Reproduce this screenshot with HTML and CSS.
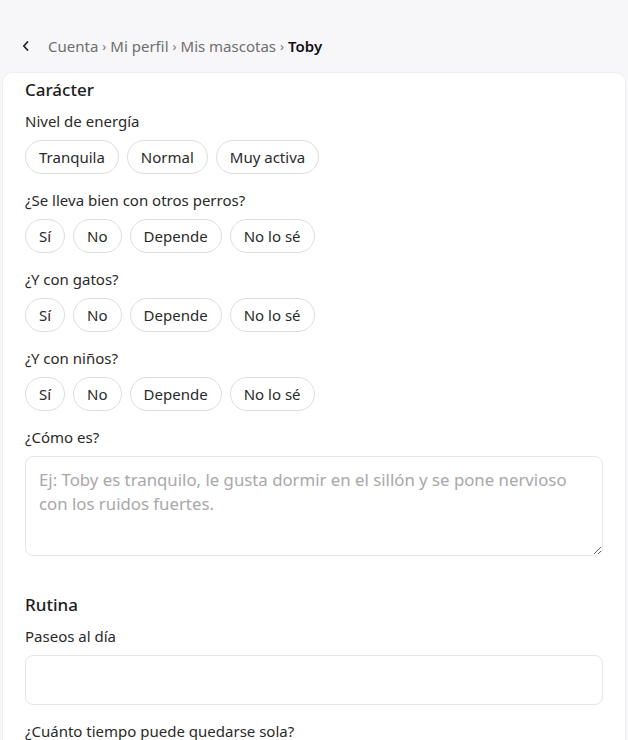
FILE: index.html
```html
<!DOCTYPE html>
<html lang="es">
<head>
<meta charset="utf-8">
<link rel="stylesheet" href="styles.css">
</head>
<body>
<nav class="crumbs">
  <svg class="back" width="10" height="12" viewBox="0 0 10 12"><path d="M6.5 2 L2.8 6 L6.5 10" fill="none" stroke="#222" stroke-width="1.8" stroke-linecap="round" stroke-linejoin="round"/></svg>
  <span class="link">Cuenta</span><span class="sep">›</span><span class="link">Mi perfil</span><span class="sep">›</span><span class="link">Mis mascotas</span><span class="sep">›</span><span class="current">Toby</span>
</nav>
<main class="card">
  <section class="section">
    <h2 class="title">Carácter</h2>
    <div class="field">
      <div class="label">Nivel de energía</div>
      <div class="pills"><span class="pill">Tranquila</span><span class="pill">Normal</span><span class="pill">Muy activa</span></div>
    </div>
    <div class="field">
      <div class="label">¿Se lleva bien con otros perros?</div>
      <div class="pills"><span class="pill">Sí</span><span class="pill">No</span><span class="pill">Depende</span><span class="pill">No lo sé</span></div>
    </div>
    <div class="field">
      <div class="label">¿Y con gatos?</div>
      <div class="pills"><span class="pill">Sí</span><span class="pill">No</span><span class="pill">Depende</span><span class="pill">No lo sé</span></div>
    </div>
    <div class="field">
      <div class="label">¿Y con niños?</div>
      <div class="pills"><span class="pill">Sí</span><span class="pill">No</span><span class="pill">Depende</span><span class="pill">No lo sé</span></div>
    </div>
    <div class="field">
      <div class="label">¿Cómo es?</div>
      <textarea class="area" placeholder="Ej: Toby es tranquilo, le gusta dormir en el sillón y se pone nervioso con los ruidos fuertes."></textarea>
    </div>
  </section>
  <section class="section">
    <h2 class="title">Rutina</h2>
    <div class="field">
      <div class="label">Paseos al día</div>
      <input class="input" type="text">
    </div>
    <div class="field">
      <div class="label">¿Cuánto tiempo puede quedarse sola?</div>
    </div>
  </section>
</main>
</body>
</html>
```
FILE: styles.css
```css
* { box-sizing: border-box; }
html, body { margin: 0; padding: 0; }
body {
  background: #f7f7f9;
  font-family: "Noto Sans", "Open Sans", sans-serif;
  color: #262626;
  height: 740px;
  overflow: hidden;
}
.crumbs {
  display: flex;
  align-items: center;
  height: 72px;
  padding: 19px 0 0 21px;
  font-size: 15px;
}
.back { margin-right: 17px; }
.link { color: #6e6e6e; }
.sep { color: #777; margin: 0 4px; font-size: 13px; }
.current { color: #111; font-weight: 600; }
.card {
  background: #fff;
  margin: 0 2px;
  border: 1px solid #eeeeee;
  border-bottom: none;
  border-radius: 10px 10px 0 0;
  padding: 4px 22px 0;
}
.section { padding-bottom: 20px; }
.title {
  margin: 0 0 8px;
  font-size: 17px;
  font-weight: 500;
  line-height: 26px;
  color: #1c1c1c;
}
.field { margin-bottom: 16px; }
.label {
  font-size: 15px;
  line-height: 20px;
  margin-bottom: 9px;
  color: #2a2a2a;
}
.pills { display: flex; gap: 8px; }
.pill {
  height: 34px;
  display: inline-flex;
  align-items: center;
  padding: 0 13px;
  border: 1px solid #dedede;
  border-radius: 17px;
  font-size: 15px;
  color: #2a2a2a;
  background: #fff;
}
.area {
  display: block;
  width: 100%;
  height: 100px;
  border: 1px solid #e6e6e6;
  border-radius: 8px;
  padding: 11px 13px;
  font-family: inherit;
  font-size: 16.8px;
  line-height: 24px;
  color: #333;
  resize: vertical;
  outline: none;
}
.area::placeholder { color: #a8a8a8; }
.input {
  display: block;
  width: 100%;
  height: 50px;
  border: 1px solid #e6e6e6;
  border-radius: 8px;
  font-family: inherit;
  font-size: 16px;
  padding: 0 13px;
  outline: none;
}
```
